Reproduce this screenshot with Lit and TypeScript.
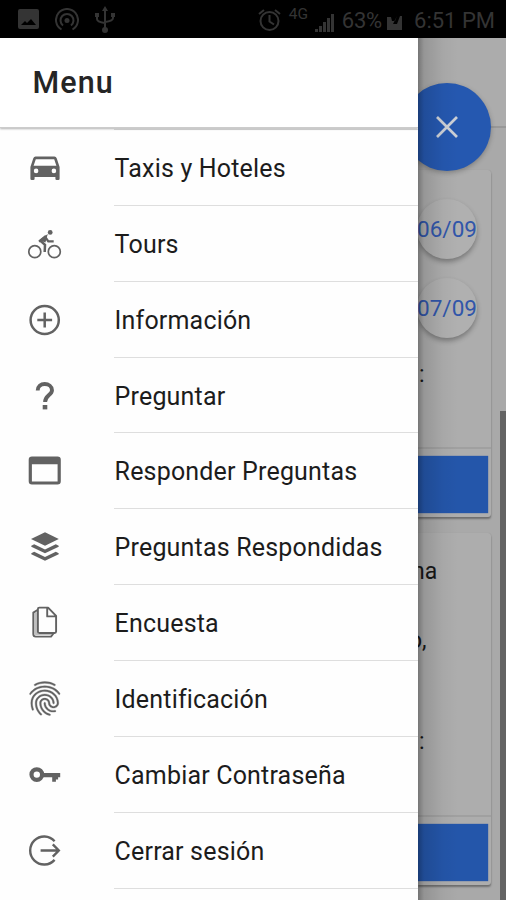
import { LitElement, html, css, svg, TemplateResult } from "lit";
import { customElement } from "lit/decorators.js";

const icons: Record<string, TemplateResult> = {
  car: svg`<path fill-rule="evenodd" d="M10.6 8.6h18.8q1.7 0 2.300 1.600L34.600 19v11.800q0 1.300-1.300 1.300h-1.600q-1.300 0-1.300-1.300V29H9.600v1.800q0 1.300-1.300 1.300H6.700q-1.300 0-1.300-1.300V19l2.900-8.800q.6-1.600 2.300-1.600zM10.800 11.200 8.600 17.700h22.800l-2.200-6.500zM11.100 20.600a2.300 2.300 0 1 0 0 4.600a2.300 2.300 0 0 0 0-4.600zM28.900 20.600a2.300 2.300 0 1 0 0 4.600a2.300 2.300 0 0 0 0-4.600z"/>`,
  bike: svg`<g fill="none" stroke="currentColor"><circle cx="9.800" cy="27.700" r="6" stroke-width="1.700"/><circle cx="29.300" cy="27.700" r="6" stroke-width="1.700"/><path d="M14 17.600 20 12.600 23.300 17.400H28.700" stroke-width="2.300"/><path d="M15.200 16.600 20 20.700 19.700 28" stroke-width="2.500"/><path d="M15.200 17.200 20.200 13.600 19 18" stroke-width="3"/></g><circle cx="25.200" cy="8.400" r="2.400"/>`,
  plus: svg`<g fill="none" stroke="currentColor" stroke-width="2.500"><circle cx="19.700" cy="20" r="14.100"/><path d="M19.700 12.600v14.800M12.300 20h14.800"/></g>`,
  help: svg`<path d="M12.700 14.600C12.700 10.400 15.800 8 19.700 8S27 10.400 27 14.200C27 19 20.100 19.400 20.100 26" fill="none" stroke="currentColor" stroke-width="3.900"/><path d="M17.700 29h4.600v4.400h-4.600z"/>`,
  browser: svg`<path fill-rule="evenodd" d="M7 5.500h25.500q3.300 0 3.300 3.300v21.500q0 3.300-3.300 3.300H7q-3.300 0-3.300-3.300V8.800q0-3.300 3.300-3.300zM6.900 13.300v17.100h25.700V13.300z"/>`,
  layers: svg`<path d="M20 5.300 33.800 12 20 18.700 6 12z"/><path d="m6.300 18.700 2.900-1.400L20 22.400l10.800-5.100 2.900 1.400v1L20 26.300 6.300 19.700zM6.300 26.200l2.900-1.400L20 29.900l10.800-5.100 2.900 1.400v1L20 33.800 6.300 27.200z"/>`,
  docs: svg`<g fill="none" stroke="currentColor" stroke-width="1.900" stroke-linejoin="round"><path d="M14.400 4.600h8.700l8 8.300v15.600q0 1.500-1.500 1.500H14.400q-1.500 0-1.500-1.500V6.100q0-1.500 1.500-1.500zM22.200 4.700v8.700h8.800"/><path d="M12.500 7 8.300 9.600V31q0 2.600 2.500 2.600h15.200l2.800-3.600"/></g><path d="M9.500 10v20.500q0 1.500 1.500 1.500h15l1-1.500H13V8.500z" opacity=".4"/>`,
  finger: svg`<g transform="translate(-.6 -.8) scale(1.700)"><path stroke="currentColor" stroke-width=".2" d="M17.810 4.470c-.08 0-.16-.02-.23-.06C15.660 3.420 14 3 12.010 3c-1.980 0-3.860.47-5.570 1.410-.24.13-.54.04-.68-.2-.13-.24-.04-.55.2-.68C7.820 2.520 9.860 2 12.010 2c2.130 0 3.990.47 6.030 1.520.25.13.34.43.21.67-.09.18-.26.28-.44.28zM3.500 9.720c-.1 0-.2-.03-.29-.09-.23-.16-.28-.47-.12-.7.99-1.400 2.250-2.500 3.750-3.270C9.980 4.040 14 4.030 17.150 5.650c1.500.77 2.760 1.860 3.750 3.250.16.22.11.54-.12.7-.23.16-.54.11-.7-.12-.9-1.260-2.040-2.250-3.390-2.940-2.870-1.470-6.540-1.470-9.400.01-1.360.7-2.500 1.700-3.400 2.960-.08.14-.23.21-.39.21zm6.250 12.070c-.13 0-.26-.05-.35-.15-.87-.87-1.340-1.430-2.010-2.640-.69-1.230-1.050-2.730-1.050-4.340 0-2.970 2.540-5.390 5.660-5.390s5.660 2.420 5.660 5.390c0 .28-.22.5-.5.5s-.5-.22-.5-.5c0-2.420-2.090-4.390-4.660-4.390-2.570 0-4.660 1.970-4.660 4.390 0 1.440.32 2.770.93 3.850.64 1.150 1.080 1.640 1.850 2.420.19.2.19.51 0 .71-.11.1-.24.15-.37.15zm7.170-1.850c-1.190 0-2.240-.3-3.100-.89-1.490-1.010-2.380-2.650-2.380-4.390 0-.28.22-.5.5-.5s.5.22.5.5c0 1.410.72 2.740 1.940 3.560.71.48 1.540.71 2.540.71.24 0 .64-.03 1.040-.1.27-.05.53.13.58.41.05.27-.13.53-.41.58-.57.11-1.070.12-1.210.12zM14.910 22c-.04 0-.09-.01-.13-.02-1.590-.44-2.630-1.030-3.720-2.100-1.400-1.390-2.170-3.240-2.170-5.220 0-1.620 1.380-2.940 3.080-2.940 1.700 0 3.080 1.320 3.080 2.940 0 1.070.93 1.940 2.080 1.940s2.080-.87 2.080-1.940c0-3.770-3.250-6.830-7.250-6.830-2.840 0-5.440 1.580-6.610 4.030-.39.81-.59 1.760-.59 2.800 0 .78.07 2.010.67 3.610.1.26-.03.55-.29.64-.26.1-.55-.04-.64-.29-.49-1.310-.73-2.610-.73-3.960 0-1.200.23-2.290.68-3.240 1.330-2.790 4.280-4.600 7.510-4.600 4.550 0 8.250 3.510 8.250 7.830 0 1.620-1.380 2.940-3.080 2.940s-3.080-1.320-3.080-2.940c0-1.070-.93-1.940-2.080-1.940s-2.080.87-2.080 1.940c0 1.710.66 3.310 1.870 4.510.95.94 1.860 1.460 3.270 1.850.27.07.42.35.35.61-.05.23-.26.38-.47.38z"/></g>`,
  key: svg`<circle cx="11.800" cy="19.600" r="5.300" fill="none" stroke="currentColor" stroke-width="4.200"/><path d="M18 18h17.200v4.200h-2.100v2.400h-2.200v2.100h-3.700v-4.500H18z"/>`,
  logout: svg`<g fill="none" stroke="currentColor" stroke-width="2.400"><path d="M29.600 10.200A14 14 0 1 0 29.600 28.900"/><path d="M15.600 19.500h18M27.800 13.400l6 6.100-6 6.100"/></g>`,
};

const entries: [string, string][] = [
  ["car", "Taxis y Hoteles"],
  ["bike", "Tours"],
  ["plus", "Información"],
  ["help", "Preguntar"],
  ["browser", "Responder Preguntas"],
  ["layers", "Preguntas Respondidas"],
  ["docs", "Encuesta"],
  ["finger", "Identificación"],
  ["key", "Cambiar Contraseña"],
  ["logout", "Cerrar sesión"],
];

@customElement("status-bar")
export class StatusBar extends LitElement {
  static styles = css`
    :host { display: flex; height: 38px; align-items: center; background: #000; color: #343434;
      font: 22px/38px Roboto, sans-serif; white-space: nowrap; }
    svg { display: block; fill: currentColor; flex: none; }
    .left { display: flex; gap: 14px; padding-left: 17px; flex: 1; align-items: center; }
    .left svg { margin-top: 2px; }
    .right { display: flex; align-items: center; padding-right: 11px; }
    .alarm { margin-top: 2px; }
    .net { font-size: 15.500px; line-height: 15px; width: 20px; margin: 0 6px 9px 8px; }
    .pct { margin: 3px 5px 0 8px; letter-spacing: -0.200px; }
    .time { margin: 3px 0 0 12px; letter-spacing: 0; }
    .bars, .batt { margin-top: 7px; }
  `;
  render() {
    return html`
      <div class="left">
        <svg width="24" height="24" viewBox="0 0 24 24"><path fill-rule="evenodd" d="M3 1h17q2 0 2 2v16q0 2-2 2H3q-2 0-2-2V3q0-2 2-2zM4 17h15l-5-6-4 4-2-2z"/></svg>
        <svg width="24" height="24" viewBox="0 0 24 24"><g fill="none" stroke="currentColor" stroke-width="2"><path d="M6.500 21.500A11 11 0 1 1 17.500 21.500"/><path d="M8 17.500A6.500 6.500 0 1 1 16 17.500"/></g><circle cx="12" cy="12.500" r="2.500"/></svg>
        <svg width="24" height="28" viewBox="0 0 24 28"><path d="M12 3v20M4 9v4q0 3 8 4M20 9v3q0 3-8 4" fill="none" stroke="currentColor" stroke-width="2"/><path d="m12 0 3 5H9zM2 7h4v4H2zM18 7h4v4h-4z"/><circle cx="12" cy="24" r="3"/></svg>
      </div>
      <div class="right">
        <svg class="alarm" width="23" height="24" viewBox="0 0 23 24"><g fill="none" stroke="currentColor" stroke-width="2"><circle cx="11.500" cy="13" r="9"/><path d="M11.500 7v6.500l4.500 3M1 6l5-4M22 6l-5-4"/></g></svg>
        <span class="net">4G</span>
        <svg class="bars" width="19" height="18" viewBox="0 0 19 18"><path d="M0 15h3v3H0zM4 12h3v6H4zM8 8h3v10H8zM12 4h3v14h-3zM16 0h3v18h-3z"/></svg>
        <span class="pct">63%</span>
        <svg class="batt" width="15" height="15" viewBox="0 0 15 15"><path d="M0 2h4l1 4h3l2-5-4 8h4l3-8h2v14H0z"/></svg>
        <span class="time">6:51 PM</span>
      </div>`;
  }
}

@customElement("side-menu")
export class SideMenu extends LitElement {
  static styles = css`
    :host { display: block; background: #fefefe; font-family: Roboto, sans-serif; overflow: hidden; }
    header { box-sizing: border-box; height: 90px; padding: 0 0 0 32.500px; display: flex; align-items: center;
      font-size: 30.500px; font-weight: 500; color: #252525; letter-spacing: 1.100px; background: #fff;
      border-bottom: 1px solid #ccc; box-shadow: 0 1px 2px rgba(0, 0, 0, .3); position: relative; }
    .lead { height: 2px; margin-left: 114px; border-bottom: 1px solid #dedede; box-sizing: border-box; }
    .row { display: flex; height: 75.870px; }
    .icon { width: 40px; height: 40px; margin: 18px 49px 0 25px; color: #626262; fill: currentColor; flex: none; }
    .label { flex: 1; box-sizing: border-box; border-bottom: 1.500px solid #dedede; display: flex; align-items: center;
      font-size: 25px; color: #1c1c1c; padding: 2px 0 0 .6px; letter-spacing: 0.180px; white-space: nowrap; }
  `;
  render() {
    return html`<header>Menu</header><div class="lead"></div>
      ${entries.map(([icon, label]) => html`<div class="row">
        <svg class="icon" viewBox="0 0 40 40">${icons[icon]}</svg><div class="label">${label}</div>
      </div>`)}`;
  }
}

@customElement("page-behind")
export class PageBehind extends LitElement {
  static styles = css`
    :host { display: block; position: relative; background: #a9a9a9; overflow: hidden; font: 23px/28px Roboto, sans-serif; color: #171717; }
    .toolbar { height: 90px; box-sizing: border-box; background: #acacac; border-bottom: 2px solid #989898; }
    .card { width: 73px; box-sizing: border-box; background: #adadad; border-radius: 0 3px 3px 0;
      box-shadow: 0 2px 2px rgba(0, 0, 0, .35), 0 0 1px rgba(0, 0, 0, .15); display: flex; flex-direction: column; }
    .first { margin-top: 42px; height: 347px; padding-top: 29px; }
    .second { margin-top: 16px; height: 352px; padding-top: 25px; }
    .chip { width: 60px; height: 60px; border-radius: 50%; margin: 0 0 19px -1px; flex: none; background: #b0b0b0; color: #3156aa;
      box-shadow: 0 3px 5px rgba(0, 0, 0, .3); display: flex; align-items: center; justify-content: center; font-size: 22.500px; }
    .text { height: 28px; flex: none; white-space: nowrap; }
    .colon { margin: 4px 0 0 1px; }
    .na { margin-left: -6px; }
    .comma { margin: 41px 0 0 -9px; }
    .low { margin: 73px 0 0 1px; }
    .foot { margin-top: auto; border-top: 2px solid #a0a0a0; padding: 7px 3px 4px 0; }
    .button { height: 57px; background: #2456aa; box-shadow: 0 0 1px #2456aa; }
    .fab { position: absolute; left: -15px; top: 45px; width: 88px; height: 88px; border-radius: 50%; background: #2558b0;
      box-shadow: 0 2px 5px rgba(0, 0, 0, .25); display: flex; align-items: center; justify-content: center; }
    .cross { width: 24px; height: 24px; stroke: #ccd0d6; stroke-width: 2.700; fill: none; }
    .shade { position: absolute; inset: 0; background: linear-gradient(90deg, rgba(0, 0, 0, .32), rgba(0, 0, 0, .13) 6px, rgba(0, 0, 0, .03) 25px, transparent 40px); }
    .thumb { position: absolute; right: 0; top: 373px; bottom: 0; width: 6px; background: #646464; }
  `;
  render() {
    return html`
      <div class="toolbar"></div>
      <div class="card first">
        <div class="chip">06/09</div><div class="chip">07/09</div>
        <div class="text colon">:</div>
        <div class="foot"><div class="button"></div></div>
      </div>
      <div class="card second">
        <div class="text na">na</div><div class="text comma">o,</div><div class="text low">:</div>
        <div class="foot"><div class="button"></div></div>
      </div>
      <div class="fab"><svg class="cross" viewBox="0 0 24 24"><path d="m2 2 20 20M22 2 2 22"/></svg></div>
      <div class="thumb"></div><div class="shade"></div>`;
  }
}

@customElement("app-root")
export class AppRoot extends LitElement {
  static styles = css`
    :host { display: flex; flex-direction: column; width: 506px; height: 900px; overflow: hidden; background: #000; }
    .main { flex: 1; min-height: 0; display: grid; grid-template-columns: 418px 88px; grid-template-rows: 862px; }
  `;
  render() {
    return html`<status-bar></status-bar><div class="main"><side-menu></side-menu><page-behind></page-behind></div>`;
  }
}
